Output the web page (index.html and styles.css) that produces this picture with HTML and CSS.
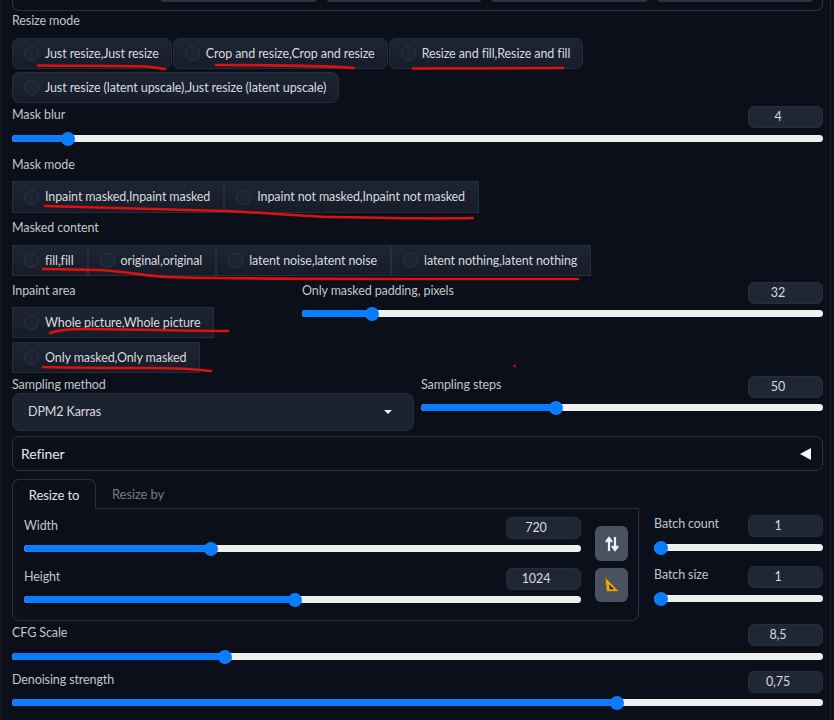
FILE: index.html
```html
<!DOCTYPE html>
<html lang="en">
<head>
    <meta charset="UTF-8">
    <meta name="viewport" content="width=device-width, initial-scale=1.0">
    <title>img2img settings</title>
    <link rel="stylesheet" href="styles.css">
</head>
<body>
    <div class="page">
        <div class="top-panel">
            <div class="top-input"></div>
            <div class="top-input"></div>
            <div class="top-input"></div>
            <div class="top-input"></div>
        </div>

        <div class="label resize-label">Resize mode</div>
        <div class="radio-group rounded">
            <label class="radio"><span class="dot"></span>Just resize,Just resize</label>
            <label class="radio"><span class="dot"></span>Crop and resize,Crop and resize</label>
            <label class="radio"><span class="dot"></span>Resize and fill,Resize and fill</label>
            <label class="radio"><span class="dot"></span>Just resize (latent upscale),Just resize (latent upscale)</label>
        </div>

        <div class="slider-block gap7 blur-block">
            <div class="slider-head"><span class="label">Mask blur</span><span class="number">4</span></div>
            <div class="track"><div class="fill" style="width: 6.9%"></div><span class="thumb"></span></div>
        </div>

        <div class="label mask-label">Mask mode</div>
        <div class="radio-group mask-group">
            <label class="radio"><span class="dot"></span>Inpaint masked,Inpaint masked</label>
            <label class="radio"><span class="dot"></span>Inpaint not masked,Inpaint not masked</label>
        </div>

        <div class="label content-label">Masked content</div>
        <div class="radio-group content-group">
            <label class="radio"><span class="dot"></span>fill,fill</label>
            <label class="radio"><span class="dot"></span>original,original</label>
            <label class="radio"><span class="dot"></span>latent noise,latent noise</label>
            <label class="radio"><span class="dot"></span>latent nothing,latent nothing</label>
        </div>

        <div class="inpaint-row">
            <div class="inpaint-left">
                <div class="label inpaint-label">Inpaint area</div>
                <div class="radio-group stacked">
                    <label class="radio"><span class="dot"></span>Whole picture,Whole picture</label>
                    <label class="radio"><span class="dot"></span>Only masked,Only masked</label>
                </div>
            </div>
            <div class="slider-block inpaint-right">
                <div class="slider-head"><span class="label">Only masked padding, pixels</span><span class="number">32</span></div>
                <div class="track"><div class="fill" style="width: 13.4%"></div><span class="thumb"></span></div>
            </div>
        </div>

        <div class="sampling-row">
            <div class="sampling-left">
                <div class="label">Sampling method</div>
                <div class="dropdown"><span>DPM2 Karras</span><span class="caret"></span></div>
            </div>
            <div class="slider-block sampling-right">
                <div class="slider-head"><span class="label">Sampling steps</span><span class="number">50</span></div>
                <div class="track"><div class="fill" style="width: 33.6%"></div><span class="thumb"></span></div>
            </div>
        </div>

        <div class="refiner"><span>Refiner</span><span class="refiner-arrow"></span></div>

        <div class="size-row">
            <div class="size-left">
                <div class="tabs">
                    <div class="tab active">Resize to</div>
                    <div class="tab">Resize by</div>
                </div>
                <div class="tab-panel">
                    <div class="size-sliders">
                        <div class="slider-block">
                            <div class="slider-head"><span class="label">Width</span><span class="number">720</span></div>
                            <div class="track"><div class="fill" style="width: 33.5%"></div><span class="thumb"></span></div>
                        </div>
                        <div class="slider-block height-block">
                            <div class="slider-head"><span class="label">Height</span><span class="number">1024</span></div>
                            <div class="track"><div class="fill" style="width: 48.6%"></div><span class="thumb"></span></div>
                        </div>
                    </div>
                    <div class="size-buttons">
                        <button class="tool-btn tall">
                            <svg width="14" height="16" viewBox="0 0 14 16" fill="none" stroke="#f2f3f5" stroke-width="2.2">
                                <path d="M4 15V3M1 6l3-4 3 4"/>
                                <path d="M10 1v12M7 10l3 4 3-4"/>
                            </svg>
                        </button>
                        <button class="tool-btn">
                            <svg width="18" height="18" viewBox="0 0 18 18">
                                <path d="M2 1 L16 15.5 L3.5 15.5 Z" fill="#e8a80c" stroke="#7a5605" stroke-width="0.8"/>
                                <path d="M6 8.5 L11 13.2 L6.8 13.2 Z" fill="#1c1e24"/>
                            </svg>
                        </button>
                    </div>
                </div>
            </div>
            <div class="size-right">
                <div class="slider-block gap7">
                    <div class="slider-head"><span class="label">Batch count</span><span class="number">1</span></div>
                    <div class="track"><div class="fill" style="width: 4.1%"></div><span class="thumb"></span></div>
                </div>
                <div class="slider-block gap7 batch-size">
                    <div class="slider-head"><span class="label">Batch size</span><span class="number">1</span></div>
                    <div class="track"><div class="fill" style="width: 4.1%"></div><span class="thumb"></span></div>
                </div>
            </div>
        </div>

        <div class="slider-block gap7 cfg-block">
            <div class="slider-head"><span class="label">CFG Scale</span><span class="number">8,5</span></div>
            <div class="track"><div class="fill" style="width: 26.3%"></div><span class="thumb"></span></div>
        </div>
        <div class="slider-block denoise-block">
            <div class="slider-head"><span class="label">Denoising strength</span><span class="number">0,75</span></div>
            <div class="track"><div class="fill" style="width: 74.6%"></div><span class="thumb"></span></div>
        </div>
    </div>

    <!-- red marker scribbles drawn over the screenshot -->
    <svg class="scribbles" width="834" height="720" viewBox="0 0 834 720" fill="none" stroke="#e0100f" stroke-width="2.6" stroke-linecap="round">
        <path d="M38 65.5 C80 66 120 65.5 147 66.5 L165 69"/>
        <path d="M216 65 C260 65 310 65 354 68"/>
        <path d="M413 68.5 L563 68"/>
        <path d="M45 206 C100 208 170 209 225 211 C270 213 300 216 333 217 C380 218 430 219 473 218"/>
        <path d="M43 269 C70 269 85 270 100 270 C130 272 145 276 167 277 C240 279 340 279 420 279 L578 279"/>
        <path d="M50 333 C58 330 70 329 83 329 C130 329 180 331 228 331"/>
        <path d="M43 367 C80 368 120 368 150 368 C175 368 195 369 211 371"/>
        <circle cx="514.5" cy="366" r="0.8" fill="#e0100f" stroke-width="1"/>
    </svg>
</body>
</html>
```

FILE: styles.css
```css
* {
    box-sizing: border-box;
}
body {
    margin: 0;
    height: 720px;
    overflow: hidden;
    position: relative;
    background-color: #0b0f19;
    color: #d8dade;
    font-family: 'Lato', sans-serif;
    font-size: 12.5px;
    letter-spacing: -0.1px;
    line-height: 16px;
}
.page {
    margin-left: 1px;
    margin-right: 3px;
    padding-left: 10px;
    padding-right: 7px;
    height: 720px;
    border-left: 1px solid #191e2a;
    border-right: 1px dotted #2b3140;
}
.top-panel {
    height: 11px;
    display: flex;
    gap: 11px;
    padding-left: 148px;
    padding-right: 10px;
    border: 1px solid #2a3140;
    border-top: none;
    border-radius: 0 0 7px 7px;
}
.top-input {
    flex: 1;
    height: 2px;
    background-color: #2c3444;
    border-radius: 0 0 3px 3px;
}
.label {
    color: #c2c5cb;
    white-space: nowrap;
}
.resize-label {
    margin-top: 2px;
}
.mask-label {
    margin-top: 15px;
}
.content-label {
    margin-top: 7px;
}
.radio-group {
    display: flex;
    flex-wrap: wrap;
}
.radio-group.rounded {
    margin-top: 9px;
    gap: 3px 1px;
}
.radio-group.rounded .radio {
    border-radius: 7px;
}
.mask-group {
    margin-top: 8px;
}
.mask-group .radio {
    height: 32px;
    padding-right: 13px;
}
.content-group {
    margin-top: 9px;
}
.content-group .radio {
    padding-right: 13px;
}
.radio-group.stacked {
    margin-top: 8px;
    flex-direction: column;
    align-items: flex-start;
    gap: 4px;
}
.radio {
    display: flex;
    align-items: center;
    height: 31px;
    padding: 0 12px 0 11px;
    gap: 6px;
    white-space: nowrap;
    background: linear-gradient(#1d2433, #161c29);
    border: 1px solid #262d3b;
}
.dot {
    width: 15px;
    height: 15px;
    border-radius: 50%;
    background-color: #1c2331;
    border: 1px solid #2d3544;
}
.slider-head {
    display: flex;
    justify-content: space-between;
    align-items: flex-start;
    height: 22px;
}
.slider-head .label {
    padding-top: 1px;
}
.number {
    width: 75px;
    height: 22px;
    text-align: center;
    padding-right: 15px;
    background-color: #1f2735;
    border: 1px solid #262e3d;
    border-radius: 6px;
    line-height: 20px;
}
.track {
    display: flex;
    align-items: center;
    height: 7px;
    margin-top: 6px;
    background-color: #efefef;
    border-radius: 4px;
}
.gap7 .track {
    margin-top: 7px;
}
.fill {
    height: 7px;
    background-color: #0a7cff;
    border-radius: 4px 0 0 4px;
}
.thumb {
    flex: none;
    width: 14px;
    height: 14px;
    margin-left: -7px;
    border-radius: 50%;
    background-color: #0a7cff;
}
.blur-block {
    margin-top: 3px;
}
.inpaint-row {
    display: flex;
    margin-top: 7px;
}
.inpaint-left {
    flex: none;
    width: 290px;
}
.inpaint-right {
    flex: 1;
    margin-top: -1px;
}
.sampling-row {
    display: flex;
    margin-top: 3px;
}
.sampling-left {
    flex: none;
    width: 402px;
    padding-top: 1px;
}
.sampling-right {
    flex: 1;
    margin-left: 7px;
}
.dropdown {
    display: flex;
    justify-content: space-between;
    align-items: center;
    height: 38px;
    padding: 0 21px 0 15px;
    background-color: #1b2230;
    border: 1px solid #282f3e;
    border-radius: 8px;
}
.caret {
    width: 0;
    height: 0;
    border-left: 4px solid transparent;
    border-right: 4px solid transparent;
    border-top: 4px solid #f0f0f0;
}
.refiner {
    display: flex;
    justify-content: space-between;
    align-items: center;
    height: 35px;
    margin-top: 5px;
    padding: 0 11px 0 8px;
    font-size: 14px;
    color: #e6e7ea;
    border: 1px solid #2a3140;
    border-radius: 7px;
}
.refiner-arrow {
    width: 0;
    height: 0;
    border-top: 6px solid transparent;
    border-bottom: 6px solid transparent;
    border-right: 11px solid #f6f6f6;
}
.size-row {
    display: flex;
    gap: 15px;
    margin-top: 8px;
}
.size-left {
    flex: none;
    width: 627px;
}
.size-right {
    flex: 1;
    padding-top: 36px;
}
.batch-size {
    margin-top: 15px;
}
.tabs {
    display: flex;
    height: 30px;
}
.tab {
    height: 30px;
    padding: 0 16px;
    line-height: 30px;
    color: #757b87;
    font-size: 13px;
}
.tab.active {
    width: 84px;
    padding: 0;
    text-align: center;
    color: #e2e4e8;
    background-color: #0b0f19;
    border: 1px solid #2a3140;
    border-bottom: none;
    border-radius: 7px 7px 0 0;
    position: relative;
    z-index: 1;
}
.tab-panel {
    display: flex;
    height: 113px;
    margin-top: -1px;
    padding: 8px 10px 0 11px;
    border: 1px solid #2a3140;
    border-radius: 0 0 7px 7px;
}
.size-sliders {
    flex: none;
    width: 557px;
}
.height-block {
    margin-top: 16px;
}
.size-buttons {
    display: flex;
    flex-direction: column;
    gap: 7px;
    margin-left: 14px;
    padding-top: 9px;
}
.tool-btn {
    display: flex;
    align-items: center;
    justify-content: center;
    width: 33px;
    height: 34px;
    padding: 0;
    background-color: #4a5160;
    border: none;
    border-radius: 6px;
}
.tool-btn.tall {
    height: 35px;
}
.cfg-block {
    margin-top: 3px;
}
.denoise-block {
    margin-top: 11px;
}
.scribbles {
    position: absolute;
    top: 0;
    left: 0;
    pointer-events: none;
}
```
